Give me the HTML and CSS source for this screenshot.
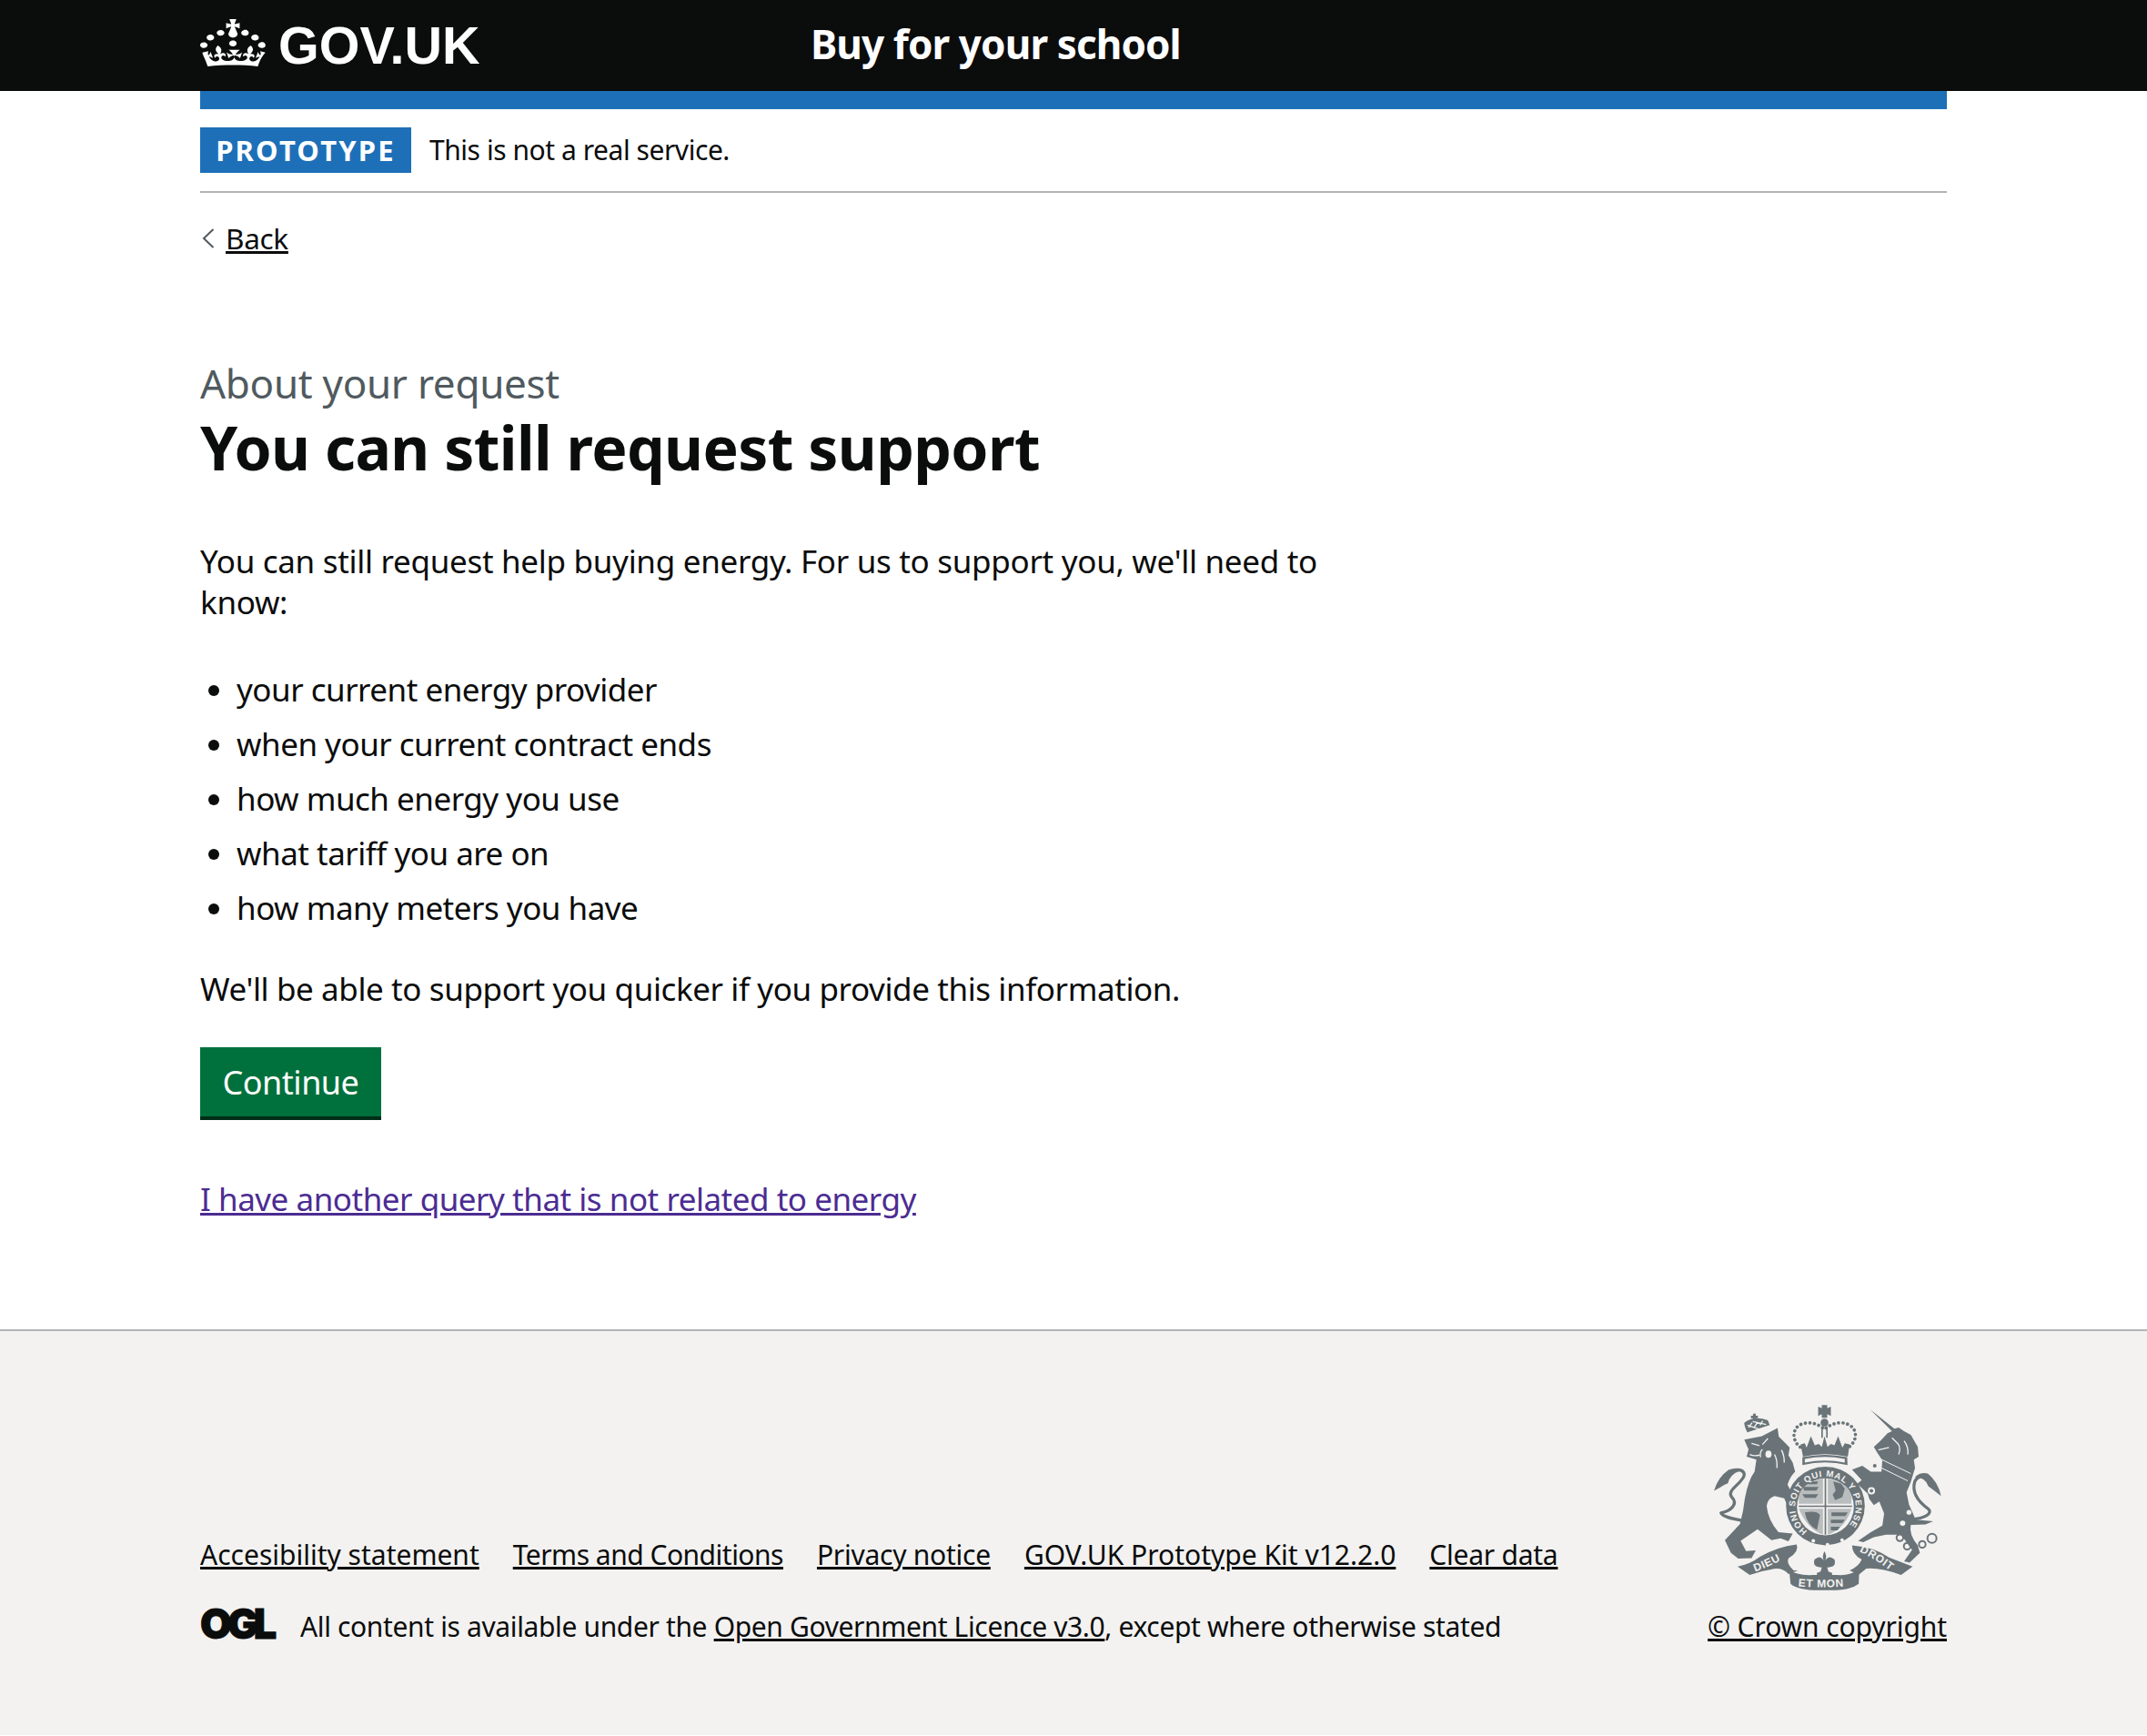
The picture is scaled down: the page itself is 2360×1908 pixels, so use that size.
FILE: index.html
```html
<!DOCTYPE html>
<html lang="en">
<head>
<meta charset="utf-8">
<title>You can still request support</title>
<link rel="stylesheet" href="styles.css">
</head>
<body>
<header class="site-header">
  <div class="wrap header-row">
    <a class="logo" href="#">
      <svg class="crown" viewBox="0 0 32 30" preserveAspectRatio="none" aria-hidden="true"><path fill="currentColor" fill-rule="evenodd" d="M22.6 10.4c-1 .4-2-.1-2.4-1-.4-.9.1-2 1-2.4.9-.4 2-.1 2.4 1s-.1 2-1 2.4m-5.9 6.7c-.9.4-2-.1-2.4-1-.4-.9.1-2 1-2.4.9-.4 2-.1 2.4 1s-.1 2-1 2.4m10.8-3.7c-1 .4-2-.1-2.4-1-.4-.9.1-2 1-2.4.9-.4 2-.1 2.4 1s0 2-1 2.4m3.3 4.8c-1 .4-2-.1-2.4-1-.4-.9.1-2 1-2.4.9-.4 2-.1 2.4 1s-.1 2-1 2.4M17 4.7l2.3 1.2V2.5l-2.3.7-.2-.2.9-3h-3.4l.9 3-.2.2c-.1.1-2.3-.7-2.3-.7v3.4L15 4.7c.1.1.1.2.2.2l-1.3 4c-.1.2-.1.4-.1.6 0 1.1.8 2 1.9 2.2h.7c1-.2 1.9-1.1 1.9-2.2 0-.2 0-.4-.1-.6l-1.3-4c-.1-.1.1-.2 0-.2m-7.6 5.7c.9.4 2-.1 2.4-1 .4-.9-.1-2-1-2.4-.9-.4-2 .1-2.4 1s0 2 1 2.4m-5 3c.9.4 2-.1 2.4-1 .4-.9-.1-2-1-2.4-.9-.4-2 .1-2.4 1s.1 2 1 2.4m-3.2 4.8c.9.4 2-.1 2.4-1 .4-1-.1-2-1-2.4-.9-.3-2 .1-2.4 1-.3 1 .1 2 1 2.4m14.8 11c4.4 0 8.6.3 12.3.8 1.1-4.5 2.4-7 3.7-8.8l-2.5-.9c.2 1.3.3 1.9 0 2.7-.4-.4-.8-1.1-1.1-2.3l-1.2 4c.7-.5 1.3-.8 2-.9-1.1 2.5-2.6 3.1-3.5 3-1.1-.2-1.7-1.2-1.5-2.1.3-1.2 1.5-1.5 2.1-.1 1.1-2.3-.8-3-2-2.3 1.9-1.9 2.1-3.5.6-5.6-2.1 1.6-2.1 3.2-1.2 5.5-1.2-1.4-3.2-.6-2.5 1.6.9-1.4 2.1-.5 1.9.8-.2 1.1-1.7 2.1-3.5 1.9-2.7-.2-2.9-2.1-2.9-3.6.7-.1 1.9.5 2.9 1.9l1-3.7c-1.1 1.1-2.1 1.4-3.2 1.4.4-1.2 2.1-3 2.1-3h-5.4s1.7 1.9 2.1 3c-1.1 0-2.1-.2-3.2-1.4l1 3.7c1-1.4 2.2-2 2.9-1.9-.1 1.5-.2 3.4-2.9 3.6-1.9.2-3.4-.8-3.5-1.9-.2-1.3 1-2.2 1.9-.8.7-2.3-1.2-3-2.5-1.6.9-2.2.9-3.9-1.2-5.5-1.5 2-1.3 3.7.6 5.6-1.2-.7-3.1 0-2 2.3.6-1.4 1.8-1.1 2.1.1.2.9-.3 1.9-1.5 2.1-.9.2-2.4-.5-3.5-3 .6 0 1.2.3 2 .9l-1.2-4c-.3 1.1-.7 1.9-1.1 2.3-.3-.8-.2-1.4 0-2.7l-2.9.9C1.3 23 2.6 25.5 3.7 30c3.7-.5 7.9-.8 12.3-.8"/></svg>
      <span class="logo-text">GOV.UK</span>
    </a>
    <a class="service-name" href="#">Buy for your school</a>
  </div>
</header>

<div class="wrap">
  <div class="phase">
    <strong class="tag">PROTOTYPE</strong>
    <span class="phase-text">This is not a real service.</span>
  </div>
  <a class="back" href="#"><svg class="chev" viewBox="0 0 14 22" aria-hidden="true"><path d="M12.5 1 L2 11 L12.5 21"/></svg>Back</a>

  <main class="main">
    <span class="caption">About your request</span>
    <h1 class="title">You can still request support</h1>
    <p class="body lead">You can still request help buying energy. For us to support you, we'll need to know:</p>
    <ul class="list">
      <li>your current energy provider</li>
      <li>when your current contract ends</li>
      <li>how much energy you use</li>
      <li>what tariff you are on</li>
      <li>how many meters you have</li>
    </ul>
    <p class="body after">We'll be able to support you quicker if you provide this information.</p>
    <a class="button" href="#">Continue</a>
    <p class="body other"><a class="visited" href="#">I have another query that is not related to energy</a></p>
  </main>
</div>

<footer class="footer">
  <div class="wrap footer-row">
    <div class="footer-left">
      <ul class="footer-links">
        <li class="fl-wide"><a href="#">Accesibility statement</a></li>
        <li class="fl-tight"><a href="#">Terms and Conditions</a></li>
        <li><a href="#">Privacy notice</a></li>
        <li class="fl-wide"><a href="#">GOV.UK Prototype Kit v12.2.0</a></li>
        <li><a href="#">Clear data</a></li>
      </ul>
      <div class="licence">
        <span class="ogl">OGL</span>
        <span>All content is available under the <a href="#">Open Government Licence v3.0</a>, except where otherwise stated</span>
      </div>
    </div>
    <div class="footer-right">
      <svg class="crest" viewBox="60 35 775 625" aria-hidden="true">
        <defs>
          <path id="garter" d="M380 458 A100 100 0 1 1 500 458"/>
          <path id="rib-l" d="M208 592 Q265 572 335 530"/>
          <path id="rib-m" d="M350 640 Q435 648 528 638"/>
          <path id="rib-r" d="M552 526 Q610 552 668 600"/>
        </defs>
        <g class="crest-fill">
          <path class="crest-line" d="M175 425 C135 418 100 412 95 398 C125 392 155 370 130 345 C112 322 168 300 172 272 C170 250 135 252 120 268"/>
          <path d="M72 325 Q85 280 120 256 Q145 248 160 258 Q125 270 118 300 Q105 305 95 312 Q85 318 72 325Z"/>
          <path d="M172 156 L230 145 L282 118 L286 146 L300 160 L322 182 L318 208 L332 232 L340 262 Q322 280 315 305 L335 345 L345 370 L350 398 L322 392 L304 350 L272 342 Q248 350 246 375 Q250 420 285 462 L332 466 L318 492 L292 482 L262 488 L216 452 Q190 470 160 490 L178 524 L210 522 L196 547 L152 549 L128 530 L108 488 L158 435 Q170 390 174 350 Q185 290 206 262 L212 222 L180 212 L186 188Z"/>
          <path class="crest-cut-thin" d="M196 168 L222 176 M250 152 L232 172 M232 188 Q222 196 226 214 M190 205 Q205 212 222 207 M272 205 Q282 225 280 250 M295 190 Q305 210 304 232"/>
          <ellipse class="crest-cut" cx="252" cy="204" rx="10" ry="12"/>
          <path d="M182 132 Q172 112 172 100 Q205 75 250 92 L256 108Z"/>
          <path d="M201 70 h9 v7 h7 v8 h-7 v8 h-9 v-8 h-7 v-8 h7z"/>
          <path class="crest-cut-thin" d="M186 116 L198 100 M205 116 L216 98 M224 108 L233 94 M182 108 L222 122 M200 96 L244 106"/>
          <path class="crest-dots" d="M370 188 C330 172 325 122 358 106 C388 94 415 104 432 118 M442 118 C460 104 490 92 520 108 C552 128 542 172 505 188"/>
          <path d="M428 42 H446 V52 L458 47 V78 L446 72 V84 H428 V72 L416 78 V47 L428 52Z"/>
          <circle cx="437" cy="100" r="13"/>
          <path class="crest-line narrow" d="M429 112 V150 M445 112 V150"/>
          <path d="M358 172 L372 168 L378 182 L392 145 L405 175 L418 170 L428 180 L437 145 L447 180 L458 170 L470 175 L482 145 L496 182 L504 168 L520 172 L514 212 Q438 196 366 212Z"/>
          <path d="M364 214 Q438 198 512 214 L513 240 Q438 222 364 240Z"/>
          <path class="crest-cut" d="M372 220 Q438 206 504 220 L504 232 Q438 218 372 232Z"/>
          <circle cx="440" cy="375" r="130"/>
          <circle class="crest-cut" cx="440" cy="378" r="94"/>
          <path class="crest-mid" d="M352 344 Q360 300 432 284 V368 H352Z M448 284 Q520 300 526 344 V368 H448Z M352 384 H432 V470 Q380 450 352 384Z M448 384 H526 Q505 450 448 470Z"/>
          <path d="M366 312 h52 l-8 12 h-40z M364 336 h52 l-8 12 h-36z M380 294 h36 l-4 9 h-28z M466 294 l26 8 12 16 -8 28 -24 10 -8 -18 10 -14z M372 396 q44 -6 50 10 l-10 48 q-32 -16 -40 -58z M460 396 h54 l-8 12 h-46z M458 420 h46 l-8 12 h-38z M458 444 h30 l-8 12 h-22z"/>
          <path class="crest-line narrow" d="M440 284 V470 M352 376 H528"/>
          <circle class="crest-cut" cx="400" cy="490" r="6"/>
          <circle class="crest-cut" cx="447" cy="503" r="6"/>
          <circle class="crest-cut" cx="495" cy="488" r="6"/>
          <text class="garter-text"><textPath href="#garter">HONI SOIT QUI MAL Y PENSE</textPath></text>
          <path d="M588 57 L668 120 L682 116 L700 128 L722 140 L745 180 L748 212 L732 222 L736 250 L722 296 L708 330 L716 370 L738 420 L796 426 L770 436 L722 438 Q715 470 745 505 L752 530 L718 562 L700 558 L726 520 L690 470 L640 470 L600 478 L565 495 L548 490 L590 462 L628 440 L634 400 L618 360 L600 372 L585 352 L580 335 L545 302 L560 290 L528 255 L562 242 L590 262 L625 262 L628 224 L612 200 L600 180 L622 160 L645 135 L660 128Z"/>
          <path class="crest-cut-thin" d="M615 190 L650 182 M660 150 L680 170 Q690 185 682 205 M700 160 Q715 180 712 205"/>
          <path class="crest-cut-thin thin" d="M626 222 L722 268 M622 248 L712 292"/>
          <circle class="crest-cut" cx="603" cy="242" r="12"/>
          <circle cx="603" cy="242" r="6"/>
          <circle class="crest-cut" cx="592" cy="325" r="12"/>
          <circle cx="592" cy="325" r="6"/>
          <circle class="crest-cut" cx="725" cy="350" r="9"/>
          <circle class="crest-cut" cx="716" cy="396" r="8"/>
          <circle class="crest-cut" cx="695" cy="432" r="9"/>
          <path class="crest-line" d="M722 420 C770 415 795 400 780 385 C745 360 725 330 735 295 C745 272 775 272 790 288"/>
          <path d="M822 342 Q812 295 778 268 Q755 262 735 280 Q770 280 780 310 L800 325Z"/>
          <g class="crest-ring">
            <circle cx="686" cy="480" r="11"/>
            <circle cx="710" cy="508" r="11"/>
            <circle cx="760" cy="502" r="11"/>
            <circle cx="792" cy="482" r="15"/>
          </g>
          <path d="M150 575 Q190 568 225 542 Q280 510 345 502 Q355 525 318 548 Q310 565 335 588 L350 588 L318 600 Q295 575 260 585 Q225 590 190 603Z"/>
          <path d="M320 585 Q345 606 400 603 H480 Q525 606 552 582 L550 632 Q520 656 440 653 Q350 656 325 632Z"/>
          <path d="M528 505 Q600 510 650 545 L728 575 L690 603 Q620 578 575 582 L550 602 L520 588 Q550 575 560 552 Q528 535 528 505Z"/>
          <path d="M437 525 Q446 540 440 555 Q452 535 470 552 Q478 578 446 578 L450 592 L462 596 L462 604 H412 V596 L424 592 L428 578 Q396 578 404 552 Q422 535 434 555 Q428 540 437 525Z"/>
          <text class="rib-text"><textPath href="#rib-l">DIEU</textPath></text>
          <text class="rib-text"><textPath href="#rib-m">ET MON</textPath></text>
          <text class="rib-text"><textPath href="#rib-r">DROIT</textPath></text>
        </g>
      </svg>
      <a class="copyright" href="#">© Crown copyright</a>
    </div>
  </div>
</footer>
</body>
</html>
```

FILE: styles.css
```css
* { box-sizing: border-box; }
html, body { margin: 0; padding: 0; }
body {
  font-family: "Noto Sans", "Liberation Sans", sans-serif;
  color: #0b0c0c;
  background: #fff;
  font-size: 35px;
  letter-spacing: -0.3px;
  line-height: 45px;
}
a { color: inherit; }
.wrap { width: 1920px; margin: 0 auto; }

.site-header { background: #0b0c0c; height: 100px; color: #fff; }
.header-row { display: flex; align-items: center; height: 100px; }
.logo { display: flex; align-items: center; width: 671px; color: #fff; text-decoration: none; }
.crown { width: 72px; height: 52px; margin-top: -6px; flex: none; }
.logo-text { font-family: "Liberation Sans", sans-serif; font-weight: 700; font-size: 57.5px; letter-spacing: 0; line-height: 60px; margin-left: 14px; }
.service-name { font-weight: 700; font-size: 44px; letter-spacing: -0.9px; color: #fff; text-decoration: none; margin-top: -3px; }

.phase { border-top: 20px solid #1d70b8; border-bottom: 2px solid #b1b4b6; padding: 20px 0; display: flex; align-items: center; gap: 20px; }
.tag { background: #1d70b8; color: #fff; height: 50px; width: 232px; font-size: 31px; line-height: 50px; text-align: center; letter-spacing: 2.2px; }
.phase-text { font-size: 30px; letter-spacing: -0.45px; line-height: 50px; }

.back { display: inline-flex; align-items: center; margin-top: 30px; font-size: 31.5px; line-height: 40px; }
.chev { width: 14px; height: 22px; margin: 0 12px 0 2px; flex: none; }
.chev path { fill: none; stroke: #505a5f; stroke-width: 2; }

.main { padding-top: 114px; padding-bottom: 121px; }
.caption { display: block; font-size: 44px; line-height: 50px; color: #505a5f; }
.title { margin: 5px 0 0; font-size: 66px; letter-spacing: -0.6px; line-height: 80px; font-weight: 700; }
.body { margin: 0; }
.lead { margin-top: 63px; width: 1280px; }
.list { margin: 51px 0 0; padding: 0 0 0 40px; letter-spacing: -0.5px; }
.list li { margin-bottom: 15px; }
.after { margin-top: 44px; letter-spacing: -0.4px; }
.button { display: block; width: 199px; height: 80px; margin-top: 42px; background: #00703c; color: #fff; text-decoration: none; border-bottom: 4px solid #002d18; text-align: center; font-size: 36px; letter-spacing: -0.5px; line-height: 77px; }
.other { margin-top: 64px; letter-spacing: -0.48px; }
.visited { color: #4c2c92; }

.footer { background: #f3f2f1; border-top: 2px solid #b1b4b6; height: 446px; font-size: 30px; letter-spacing: -0.25px; line-height: 40px; }
.footer-row { display: flex; justify-content: space-between; align-items: flex-end; height: 100%; padding-bottom: 99px; }
.footer-links { list-style: none; margin: 0 0 39px; padding: 0; display: flex; gap: 37px; }
.fl-wide { letter-spacing: 0; }
.fl-tight { letter-spacing: -0.5px; }
.licence { display: flex; align-items: center; gap: 27px; letter-spacing: -0.36px; }
.ogl { font-family: "Inter", "Liberation Sans", sans-serif; font-weight: 900; font-size: 45px; letter-spacing: -5px; line-height: 40px; width: 83px; margin-top: -6px; -webkit-text-stroke: 1px #0b0c0c; }
.footer-right { display: flex; flex-direction: column; align-items: flex-end; }
.copyright { letter-spacing: -0.1px; }
.crest { width: 258px; height: 208px; margin: 0 2px 18px 0; display: block; }
.crest-fill { fill: #6a7478; stroke-linejoin: round; }
.crest-cut { fill: #f3f2f1; }
.crest-mid { fill: #b9bdbe; }
.crest-line { fill: none; stroke: #6a7478; stroke-width: 10; }
.crest-line.narrow { stroke-width: 5; }
.crest-cut-thin { fill: none; stroke: #f3f2f1; stroke-width: 4; }
.crest-cut-thin.thin { stroke-width: 3; }
.crest-dots { fill: none; stroke: #6a7478; stroke-width: 11; stroke-dasharray: 0.1 15; stroke-linecap: round; }
.crest-ring circle { fill: none; stroke: #6a7478; stroke-width: 6; }
.garter-text { fill: #f3f2f1; font-family: "Liberation Sans", sans-serif; font-weight: 700; font-size: 29px; letter-spacing: 2.5px; }
.rib-text { fill: #f3f2f1; font-family: "Liberation Sans", sans-serif; font-weight: 700; font-size: 36px; letter-spacing: 2px; }
```
